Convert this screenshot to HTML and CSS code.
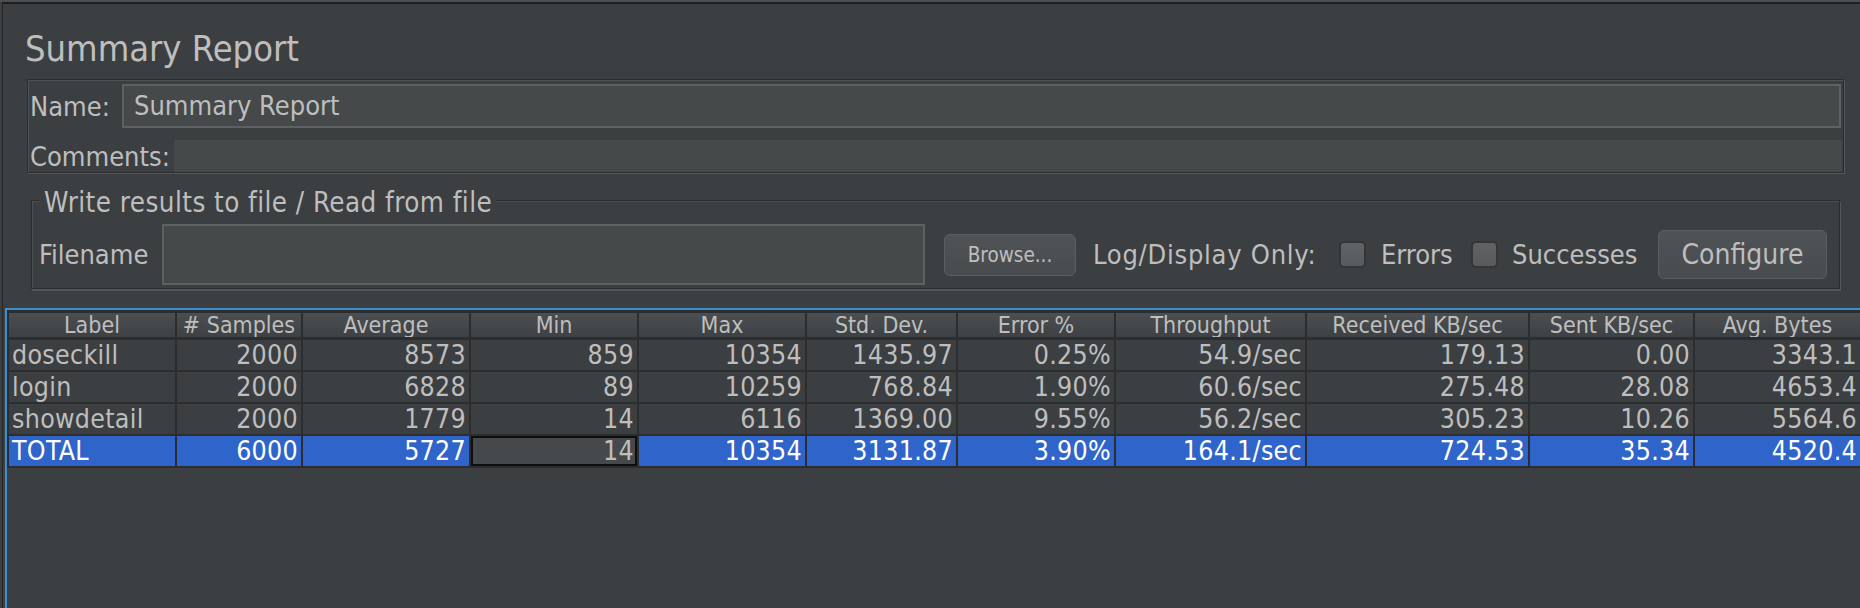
FILE: index.html
```html
<!DOCTYPE html>
<html>
<head>
<meta charset="utf-8">
<title>Summary Report</title>
<link rel="stylesheet" href="styles.css">
</head>
<body>
<div class="app">
  <h1 class="title">Summary Report</h1>

  <div class="panel">
    <div class="name-row">
      <label class="lbl name-lbl">Name:</label>
      <div class="field name-field">Summary Report</div>
    </div>
    <div class="comments-row">
      <label class="lbl comments-lbl">Comments:</label>
      <div class="field comments-field"></div>
    </div>
  </div>

  <div class="group">
    <span class="group-title">Write results to file / Read from file</span>
    <div class="file-row">
      <span class="lbl filename-lbl">Filename</span>
      <div class="field filename-field"></div>
      <button class="btn browse">Browse...</button>
      <span class="lbl log-lbl">Log/Display Only:</span>
      <span class="checkbox"></span>
      <span class="lbl errors-lbl">Errors</span>
      <span class="checkbox"></span>
      <span class="lbl succ-lbl">Successes</span>
      <button class="btn configure">Configure</button>
    </div>
  </div>

  <div class="table-pane">
    <table class="results">
      <thead>
        <tr>
          <th class="c1">Label</th>
          <th class="c2"># Samples</th>
          <th class="c3">Average</th>
          <th class="c4">Min</th>
          <th class="c5">Max</th>
          <th class="c6">Std. Dev.</th>
          <th class="c7">Error %</th>
          <th class="c8">Throughput</th>
          <th class="c9">Received KB/sec</th>
          <th class="c10">Sent KB/sec</th>
          <th class="c11">Avg. Bytes</th>
        </tr>
      </thead>
      <tbody>
        <tr>
          <td class="lab">doseckill</td><td>2000</td><td>8573</td><td>859</td><td>10354</td><td>1435.97</td><td>0.25%</td><td>54.9/sec</td><td>179.13</td><td>0.00</td><td>3343.1</td>
        </tr>
        <tr>
          <td class="lab">login</td><td>2000</td><td>6828</td><td>89</td><td>10259</td><td>768.84</td><td>1.90%</td><td>60.6/sec</td><td>275.48</td><td>28.08</td><td>4653.4</td>
        </tr>
        <tr>
          <td class="lab">showdetail</td><td>2000</td><td>1779</td><td>14</td><td>6116</td><td>1369.00</td><td>9.55%</td><td>56.2/sec</td><td>305.23</td><td>10.26</td><td>5564.6</td>
        </tr>
        <tr class="sel">
          <td class="lab">TOTAL</td><td>6000</td><td>5727</td><td class="focus">14</td><td>10354</td><td>3131.87</td><td>3.90%</td><td>164.1/sec</td><td>724.53</td><td>35.34</td><td>4520.4</td>
        </tr>
      </tbody>
    </table>
  </div>
</div>
</body>
</html>
```

FILE: styles.css
```css
html, body {
  margin: 0;
  padding: 0;
}

body {
  width: 1860px;
  height: 608px;
  overflow: hidden;
  box-sizing: border-box;
  background: #3c3f41;
  border-top: 2px solid #4c4f51;
  font-family: "DejaVu Sans Condensed", "DejaVu Sans", sans-serif;
  color: #bebebe;
}

.app {
  box-sizing: border-box;
  height: 606px;
  margin-left: 2px;
  border-left: 1px solid #242526;
  border-top: 2px solid #1d1e1f;
  display: flex;
  flex-direction: column;
  align-items: flex-start;
}

.title {
  margin: 25px 0 10px 22px;
  font-size: 36px;
  line-height: 40px;
  font-weight: normal;
  white-space: nowrap;
}

.lbl {
  font-size: 27px;
  white-space: nowrap;
  flex: none;
}

.field {
  box-sizing: border-box;
  background: #45494a;
  font-size: 27px;
  color: #bebebe;
}

/* Name / Comments panel */
.panel {
  box-sizing: border-box;
  margin-left: 24px;
  width: 1817px;
  border: 1px solid #2b2d2f;
  box-shadow: inset 1px 1px 0 #505356, 1px 1px 0 #54575a;
  padding: 4px 1px 0 2px;
}

.name-row {
  display: flex;
  align-items: center;
  height: 44px;
}

.name-lbl {
  width: 92px;
}

.name-field {
  flex: 1;
  height: 44px;
  border: 2px solid #5e6163;
  padding-left: 10px;
  line-height: 40px;
  margin-right: 1px;
}

.comments-row {
  display: flex;
  align-items: center;
  height: 32px;
  margin-top: 12px;
}

.comments-lbl {
  width: 144px;
}

.comments-field {
  flex: 1;
  height: 32px;
}

/* Write results group */
.group {
  position: relative;
  box-sizing: border-box;
  margin-top: 27px;
  margin-left: 28px;
  width: 1809px;
  border: 1px solid #2b2d2f;
  box-shadow: inset 1px 1px 0 #4d5053, 1px 2px 0 #54575a;
  padding: 23px 0 3px 4px;
}

.group-title {
  position: absolute;
  left: 7px;
  top: -13px;
  padding: 0 4px 0 5px;
  background: #3c3f41;
  font-size: 27.5px;
  letter-spacing: 0.45px;
  line-height: 28px;
  white-space: nowrap;
}

.file-row {
  display: flex;
  align-items: center;
  height: 61px;
}

.filename-lbl {
  width: 126px;
  padding-left: 3px;
  box-sizing: border-box;
}

.filename-field {
  width: 763px;
  height: 61px;
  border: 2px solid #5e6163;
  flex: none;
}

.btn {
  box-sizing: border-box;
  flex: none;
  padding: 0;
  border: 1px solid #5b5f62;
  border-radius: 6px;
  background: linear-gradient(#4f5355, #484c4e);
  color: #bebebe;
  font-family: inherit;
}

.browse {
  margin-left: 19px;
  width: 132px;
  height: 42px;
  font-size: 20.5px;
}

.log-lbl {
  margin-left: 17px;
  width: 246px;
  letter-spacing: 0.75px;
}

.checkbox {
  flex: none;
  box-sizing: border-box;
  width: 27px;
  height: 27px;
  border: 2px solid #343638;
  border-radius: 5px;
  background: linear-gradient(#606365, #585b5d);
}

.errors-lbl {
  box-sizing: border-box;
  width: 105px;
  padding-left: 15px;
}

.succ-lbl {
  box-sizing: border-box;
  width: 160px;
  padding-left: 14px;
}

.configure {
  width: 169px;
  height: 49px;
  font-size: 28px;
}

/* Results table */
.table-pane {
  flex: 1;
  box-sizing: border-box;
  margin-top: 19px;
  margin-left: 2px;
  width: 1870px;
  border-top: 2px solid #3a8fd2;
  border-left: 2px solid #3a8fd2;
  overflow: hidden;
}

.results {
  table-layout: fixed;
  width: 1855px;
  border-collapse: separate;
  border-spacing: 0;
  border-top: 3px solid #2b2d2e;
  border-left: 2px solid #2b2d2e;
}

.results th,
.results td {
  box-sizing: border-box;
  padding: 0 3px;
  border-right: 2px solid #2b2d2e;
  white-space: nowrap;
  overflow: hidden;
}

.results th {
  height: 27px;
  border-bottom: 3px solid #2b2d2e;
  background: linear-gradient(#4b4f51, #3e4143);
  font-size: 23px;
  line-height: 24px;
  font-weight: normal;
  color: #bebebe;
  text-align: center;
}

.results .c1 { width: 168px; }
.results .c2 { width: 126px; }
.results .c3 { width: 168px; }
.results .c4 { width: 168px; }
.results .c5 { width: 168px; }
.results .c6 { width: 151px; }
.results .c7 { width: 158px; }
.results .c8 { width: 191px; }
.results .c9 { width: 223px; }
.results .c10 { width: 165px; }
.results .c11 { width: 167px; }

.results td {
  height: 32px;
  border-bottom: 2px solid #2b2d2e;
  background: #3c3f41;
  font-size: 26.5px;
  letter-spacing: 0.3px;
  line-height: 30px;
  text-align: right;
  color: #bebebe;
}

.results td.lab {
  text-align: left;
}

.results tr.sel td {
  background: #2f65ca;
  color: #ffffff;
}

.results tr.sel td.focus {
  background: #45494b;
  color: #bebebe;
  box-shadow: inset 0 0 0 2px #0e0e0e;
}
```
